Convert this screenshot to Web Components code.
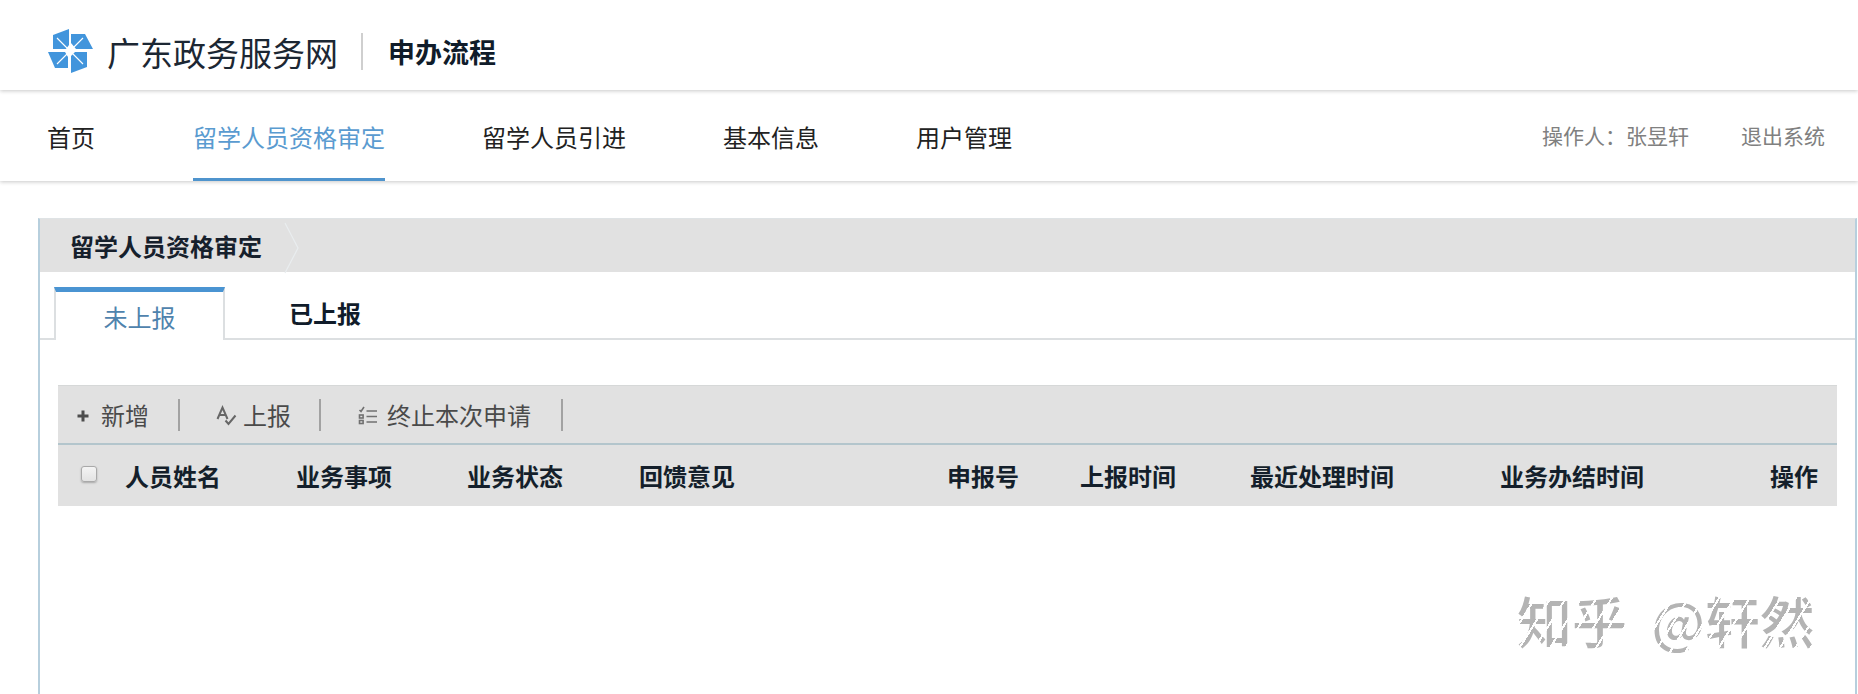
<!DOCTYPE html>
<html lang="zh">
<head>
<meta charset="utf-8">
<title>申办流程</title>
<style>
  html, body { margin: 0; padding: 0; background: #fff; height: 694px; overflow: hidden; }
  body { font-family: "Noto Sans CJK SC", "Liberation Sans", sans-serif; color: #1c2733; }
</style>
</head>
<body>
<site-header title-text="广东政务服务网" sub-text="申办流程"></site-header>
<main-nav></main-nav>
<content-panel heading="留学人员资格审定">
  <tab-bar></tab-bar>
  <action-toolbar></action-toolbar>
  <grid-head></grid-head>
</content-panel>
<water-mark>知乎 @轩然</water-mark>

<script>
const logo = /* html */ `
  <svg width="45" height="45" viewBox="0 0 45 45">
    <g fill="#4295dc">
      <path d="M5 6 21 0V16L18 20H5Z"/>
      <path d="M23 5H37L45 20H28L23 14Z"/>
      <path d="M0 23H17L20 28V39H7Z"/>
      <path d="M27 23H39V38L23 44V27Z"/>
    </g>
    <g stroke="#fff" stroke-width="1.1">
      <path d="M9 9 35 35M35 9 9 35"/>
    </g>
    <circle cx="22" cy="22" r="3" fill="#fff"/>
  </svg>`

class SiteHeader extends HTMLElement {
  constructor() {
    super()
    this.shadow = this.attachShadow({ mode: "open" })
  }
  connectedCallback() {
    this.shadow.innerHTML = /* html */ `
      <style>
        :host {
          display: flex;
          align-items: center;
          height: 90px;
          padding: 13px 0 0 48px;
          box-sizing: border-box;
          position: relative;
          z-index: 2;
          box-shadow: 0 1px 4px rgba(0, 0, 0, 0.22);
          background: #fff;
        }
        svg { display: block; margin-right: 14px; }
        .name { font-size: 33px; color: #1c2733; white-space: nowrap; }
        .line { width: 2px; height: 37px; background: #cfcfcf; margin: 0 25px 0 23px; }
        .sub { font-size: 27px; font-weight: 700; color: #101c2a; white-space: nowrap; }
      </style>
      ${logo}
      <span class="name">${this.getAttribute("title-text")}</span>
      <span class="line"></span>
      <span class="sub">${this.getAttribute("sub-text")}</span>
    `
  }
}

class MainNav extends HTMLElement {
  constructor() {
    super()
    this.shadow = this.attachShadow({ mode: "open" })
  }
  connectedCallback() {
    const items = ["首页", "留学人员资格审定", "留学人员引进", "基本信息", "用户管理"]
    this.shadow.innerHTML = /* html */ `
      <style>
        :host {
          display: flex;
          align-items: stretch;
          justify-content: space-between;
          height: 91px;
          padding: 0 33px 0 47px;
          box-sizing: border-box;
          box-shadow: 0 1px 4px rgba(0, 0, 0, 0.22);
          background: #fff;
          position: relative;
          z-index: 1;
        }
        .menu { display: flex; gap: 97px; }
        a {
          display: flex;
          align-items: center;
          font-size: 24px;
          color: #222;
          border-bottom: 3px solid transparent;
          padding-top: 5px;
          box-sizing: border-box;
        }
        a:nth-child(2) { margin-left: 1px; }
        a.on { color: #5a9bd0; border-bottom-color: #4f94cd; }
        .user { display: flex; align-items: center; gap: 52px; font-size: 21px; color: #808080; margin-top: -1px; }
      </style>
      <div class="menu">
        ${items.map((t, i) => `<a class="${i === 1 ? "on" : ""}">${t}</a>`).join("")}
      </div>
      <div class="user"><span>操作人：张昱轩</span><span>退出系统</span></div>
    `
  }
}

class ContentPanel extends HTMLElement {
  constructor() {
    super()
    this.shadow = this.attachShadow({ mode: "open" })
  }
  connectedCallback() {
    this.shadow.innerHTML = /* html */ `
      <style>
        :host {
          display: block;
          margin: 37px 1px 0 38px;
          height: 475px;
          border-left: 2px solid #b7cfdd;
          border-right: 2px solid #b7cfdd;
          border-top: 1px solid #dfe3e5;
        }
        .title {
          display: flex;
          align-items: center;
          height: 53px;
          background: #e1e1e1;
          position: relative;
        }
        .title span {
          font-size: 24px;
          font-weight: 700;
          color: #16202c;
          padding-left: 30px;
        }
        .title svg { position: absolute; left: 244px; top: 3px; }
      </style>
      <div class="title">
        <span>${this.getAttribute("heading")}</span>
        <svg width="16" height="52" viewBox="0 0 16 52"><path d="M1 1 14 26 1 51" fill="none" stroke="#e9edef" stroke-width="1.2"/></svg>
      </div>
      <slot></slot>
    `
  }
}

class TabBar extends HTMLElement {
  constructor() {
    super()
    this.shadow = this.attachShadow({ mode: "open" })
  }
  connectedCallback() {
    this.shadow.innerHTML = /* html */ `
      <style>
        :host {
          display: flex;
          height: 68px;
          padding: 15px 0 0 14px;
          box-sizing: border-box;
          border-bottom: 2px solid #dcdfe1;
        }
        .tab {
          box-sizing: border-box;
          display: flex;
          align-items: center;
          justify-content: center;
          font-size: 24px;
        }
        .on {
          width: 171px;
          height: 53px;
          color: #4f83ad;
          background: #fff;
          border: 2px solid #dcdfe1;
          border-top: 5px solid #4a94d2;
          border-bottom: 0;
          padding-top: 1px;
        }
        .off { height: 50px; font-weight: 700; color: #101c2a; margin-left: 45px; width: 110px; }
      </style>
      <div class="tab on">未上报</div>
      <div class="tab off">已上报</div>
    `
  }
}

class ActionToolbar extends HTMLElement {
  constructor() {
    super()
    this.shadow = this.attachShadow({ mode: "open" })
  }
  connectedCallback() {
    this.shadow.innerHTML = /* html */ `
      <style>
        :host {
          display: flex;
          align-items: center;
          height: 60px;
          margin: 45px 18px 0 18px;
          background: #e1e1e1;
          border-top: 1px solid #d6d8d8;
          border-bottom: 2px solid #b3c5cc;
          box-sizing: border-box;
          font-size: 24px;
          color: #4a4a4a;
        }
        .act { display: flex; align-items: center; height: 32px; box-sizing: border-box; white-space: nowrap; }
        .act + .act { border-left: 2px solid #a2a2a2; }
        .a1 { padding: 0 29px 0 17px; }
        .a2 { padding: 0 28px 0 36px; }
        .a3 { padding: 0 30px 0 37px; border-right: 2px solid #a2a2a2; }
        .a3 span { margin-left: 1px; }
        svg { display: block; flex: none; }
      </style>
      <div class="act a1">
        <svg width="16" height="16" viewBox="0 0 16 16" style="margin-right:10px;margin-top:2px"><path d="M8 2.500V13.500M2.500 8H13.500" stroke="#4d4d4d" stroke-width="3" fill="none"/></svg>
        <span>新增</span>
      </div>
      <div class="act a2">
        <svg width="21" height="21" viewBox="0 0 21 21" style="margin-right:6px;margin-top:2px"><path d="M1.500 14 6.500 2.500 11.500 14M3.500 10H9.500M9.500 15.500 12.500 19 19.500 10.500" stroke="#666" stroke-width="2" fill="none"/></svg>
        <span>上报</span>
      </div>
      <div class="act a3">
        <svg width="20" height="20" viewBox="0 0 20 20" style="margin-right:8px;margin-top:2px"><g fill="none" stroke="#707070" stroke-width="1.600"><path d="M1.500 4 3 5.500 6 1M8.500 5H19M8.500 10.500H19M8.500 16H19"/><rect x="1.500" y="9" width="3.600" height="3"/><rect x="1.500" y="14.500" width="3.600" height="3"/></g></svg>
        <span>终止本次申请</span>
      </div>
    `
  }
}

class GridHead extends HTMLElement {
  constructor() {
    super()
    this.shadow = this.attachShadow({ mode: "open" })
  }
  connectedCallback() {
    const cols = ["人员姓名", "业务事项", "业务状态", "回馈意见", "申报号", "上报时间", "最近处理时间", "业务办结时间", "操作"]
    this.shadow.innerHTML = /* html */ `
      <style>
        :host {
          display: grid;
          grid-template-columns: 67px 171px 171px 172px 308px 133px 170px 250px 270px 1fr;
          align-items: center;
          height: 61px;
          margin: 0 18px 0 18px;
          background: #e1e1e1;
          font-size: 24px;
          font-weight: 700;
          color: #141f2b;
          white-space: nowrap;
        }
        .check {
          width: 16px;
          height: 16px;
          margin-left: 23px;
          margin-top: -4px;
          box-sizing: border-box;
          border: 1px solid #a9a9a9;
          border-radius: 3px;
          background: linear-gradient(#f4f4f4, #e3e3e3);
          box-shadow: 0 1px 2px rgba(0, 0, 0, 0.25);
        }
      </style>
      <div class="check"></div>
      ${cols.map((c) => `<div>${c}</div>`).join("")}
    `
  }
}

class WaterMark extends HTMLElement {
  constructor() {
    super()
    this.shadow = this.attachShadow({ mode: "open" })
  }
  connectedCallback() {
    this.shadow.innerHTML = /* html */ `
      <style>
        :host {
          position: absolute;
          left: 1517px;
          top: 580px;
          font-size: 55px;
          line-height: 78px;
          font-weight: 500;
          color: #b4b4b4;
          white-space: nowrap;
          word-spacing: 12px;
          -webkit-mask-image: repeating-linear-gradient(122deg, #000 0 11px, transparent 11px 13px);
          mask-image: repeating-linear-gradient(122deg, #000 0 11px, transparent 11px 13px);
        }
      </style>
      <slot></slot>
    `
  }
}

customElements.define("site-header", SiteHeader)
customElements.define("main-nav", MainNav)
customElements.define("content-panel", ContentPanel)
customElements.define("tab-bar", TabBar)
customElements.define("action-toolbar", ActionToolbar)
customElements.define("grid-head", GridHead)
customElements.define("water-mark", WaterMark)
</script>
</body>
</html>
